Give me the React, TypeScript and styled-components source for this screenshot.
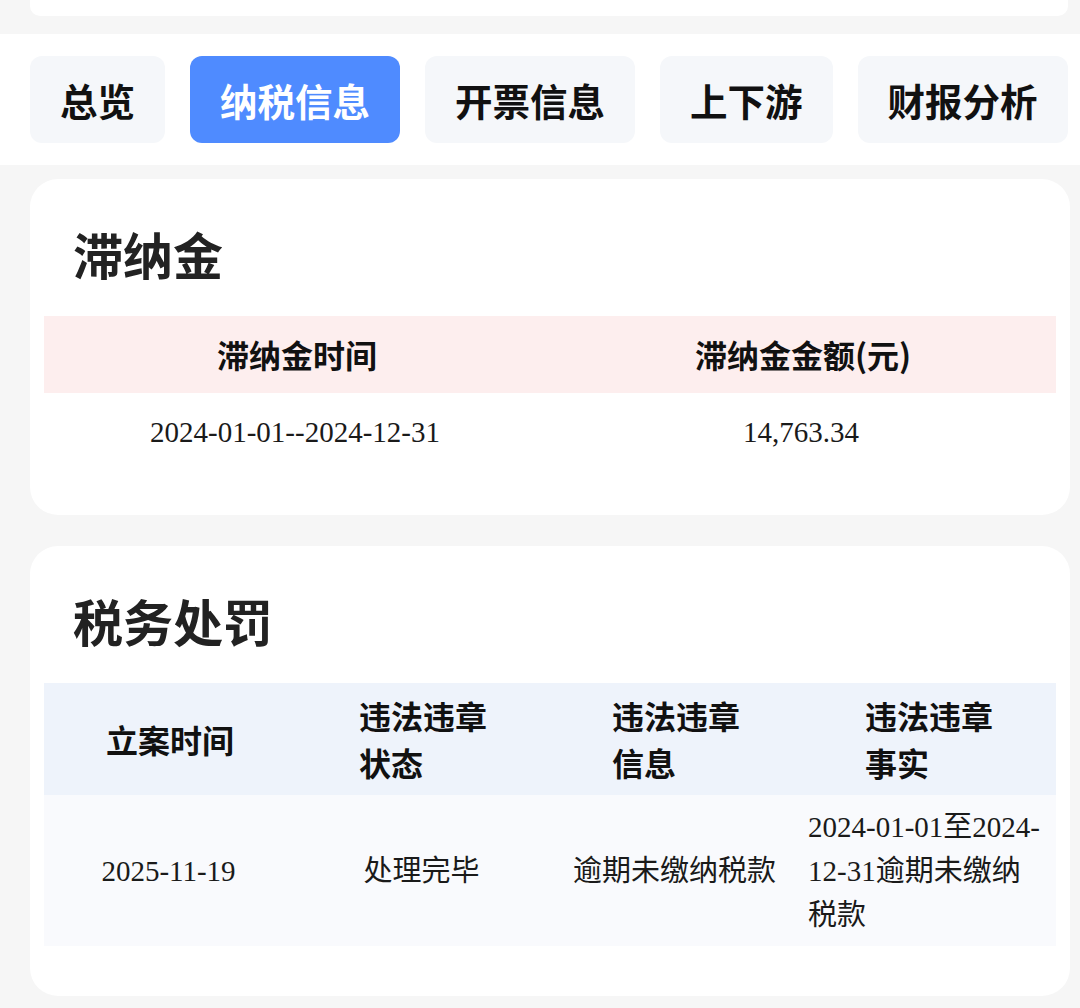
import React from "react";
import styled, { createGlobalStyle } from "styled-components";

const Global = createGlobalStyle`
  html, body {
    margin: 0;
    padding: 0;
    background: #f6f6f6;
  }
  body {
    font-family: "Noto Sans CJK SC", "Noto Sans", sans-serif;
    color: #1a1a1a;
  }
`;

const tabs = ["总览", "纳税信息", "开票信息", "上下游", "财报分析"];

const App = () => {
  return (
    <Page>
      <Global />
      <TopCard />
      <TabBar>
        {tabs.map((t) => (
          <Tab key={t} $active={t === "纳税信息"}>
            {t}
          </Tab>
        ))}
      </TabBar>

      <Card $bottom={45}>
        <Title>滞纳金</Title>
        <Table $cols={2}>
          <HeadCell $tint="#fdeeee" $center>
            滞纳金时间
          </HeadCell>
          <HeadCell $tint="#fdeeee" $center>
            滞纳金金额(元)
          </HeadCell>
          <DataCell $height={77}>
            <span>2024-01-01--2024-12-31</span>
          </DataCell>
          <DataCell $height={77}>
            <span>14,763.34</span>
          </DataCell>
        </Table>
      </Card>

      <Card $bottom={50}>
        <Title>税务处罚</Title>
        <Table $cols={4}>
          <HeadCell $tint="#eef3fb" $pad={9}>立案时间</HeadCell>
          <HeadCell $tint="#eef3fb" $pad={9}>违法违章状态</HeadCell>
          <HeadCell $tint="#eef3fb" $pad={9}>违法违章信息</HeadCell>
          <HeadCell $tint="#eef3fb" $pad={9}>违法违章事实</HeadCell>
          <DataCell $height={151} $tint="#f9fafd">
            <span>2025-11-19</span>
          </DataCell>
          <DataCell $height={151} $tint="#f9fafd">
            <span>处理完毕</span>
          </DataCell>
          <DataCell $height={151} $tint="#f9fafd">
            <span>逾期未缴纳税款</span>
          </DataCell>
          <DataCell $height={151} $tint="#f9fafd">
            <span>2024-01-01至2024-12-31逾期未缴纳税款</span>
          </DataCell>
        </Table>
      </Card>
    </Page>
  );
};

export default App;

const Page = styled.div`
  width: 1080px;
  height: 1008px;
  overflow: hidden;
  background: #f6f6f6;
`;

const TopCard = styled.div`
  height: 16px;
  margin: 0 12px 18px 30px;
  background: #ffffff;
  border-radius: 0 0 10px 10px;
`;

const TabBar = styled.div`
  display: flex;
  gap: 25px;
  padding: 22px 0 22px 30px;
  background: #ffffff;
  overflow: hidden;
`;

const Tab = styled.div<{ $active?: boolean }>`
  flex: none;
  height: 87px;
  padding: 0 30px;
  display: flex;
  align-items: center;
  border-radius: 12px;
  font-size: 37.5px;
  font-weight: 700;
  background: ${(p) => (p.$active ? "#4f8bff" : "#f5f7fa")};
  color: ${(p) => (p.$active ? "#ffffff" : "#111111")};
`;

const Card = styled.div<{ $bottom: number }>`
  margin: 14px 10px 31px 30px;
  padding: 42px 14px ${(p) => p.$bottom}px;
  background: #ffffff;
  border-radius: 28px;
`;

const Title = styled.h2`
  margin: 0 0 31px 29px;
  font-size: 50px;
  line-height: 64px;
  font-weight: 700;
  color: #222222;
`;

const Table = styled.div<{ $cols: number }>`
  display: grid;
  grid-template-columns: repeat(${(p) => p.$cols}, 1fr);
`;

const HeadCell = styled.div<{ $tint: string; $center?: boolean; $pad?: number }>`
  background: ${(p) => p.$tint};
  padding: ${(p) => p.$pad ?? 8}px 62px;
  min-height: 61px;
  display: flex;
  align-items: center;
  justify-content: ${(p) => (p.$center ? "center" : "flex-start")};
  font-size: 32px;
  line-height: 47px;
  font-weight: 700;
  color: #111111;
`;

const DataCell = styled.div<{ $height: number; $tint?: string }>`
  height: ${(p) => p.$height}px;
  padding: 0 9px 0 5px;
  display: flex;
  align-items: center;
  justify-content: center;
  background: ${(p) => p.$tint || "transparent"};
  font-family: "Liberation Serif", "Noto Sans CJK SC", serif;
  font-size: 29px;
  line-height: 44px;
  color: #1a1a1a;
  span {
    display: inline-block;
    text-align: left;
    word-break: break-all;
  }
`;
